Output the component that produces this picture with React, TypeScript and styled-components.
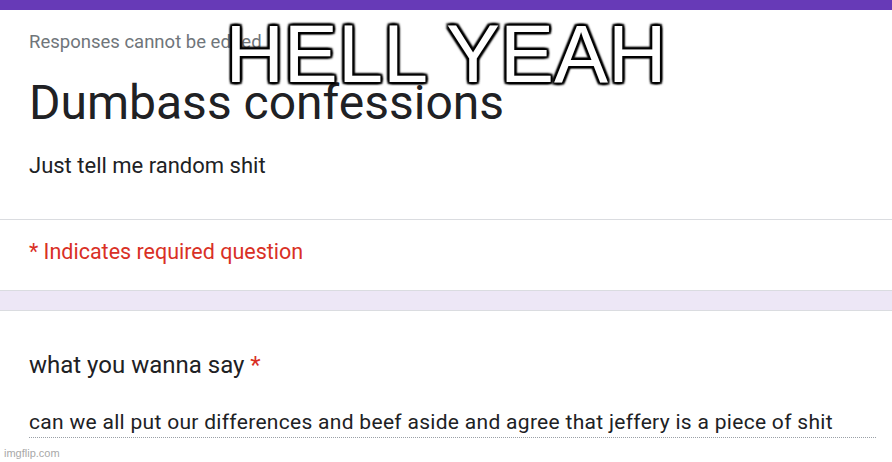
import React from "react";
import styled, { createGlobalStyle } from "styled-components";

const Global = createGlobalStyle`
  html, body { margin: 0; padding: 0; background: #ffffff; }
  body { width: 892px; height: 462px; overflow: hidden; font-family: Roboto, "Noto Sans", Arial, sans-serif; }
`;

const Page = styled.div`
  position: relative;
  width: 892px;
  height: 462px;
  background: #ffffff;
  display: flex;
  flex-direction: column;
`;

const TopBar = styled.div`
  height: 10px;
  background: #673ab7;
  flex-shrink: 0;
`;

const Card = styled.section`
  background: #ffffff;
  border-bottom: 1px solid #dadce0;
  display: flex;
  flex-direction: column;
`;

const Section = styled.div<{ $pt: number; $pb: number }>`
  padding: ${(p) => p.$pt}px 29px ${(p) => p.$pb}px 29px;
  display: flex;
  flex-direction: column;
`;

const Notice = styled.div`
  font-size: 18.5px;
  line-height: 20px;
  color: #70757a;
  white-space: nowrap;
`;

const Title = styled.h1`
  margin: 23px 0 0 0;
  font-size: 48px;
  font-weight: 400;
  line-height: 56px;
  color: #202124;
`;

const Description = styled.div`
  margin-top: 21px;
  font-size: 22px;
  line-height: 28px;
  color: #202124;
`;

const Divider = styled.hr`
  margin: 0;
  border: none;
  border-top: 1px solid #dadce0;
`;

const Required = styled.div`
  font-size: 21.5px;
  line-height: 28px;
  color: #d93025;
`;

const Gap = styled.div`
  height: 19px;
  background: #ede7f6;
  border-bottom: 1px solid #dadce0;
  flex-shrink: 0;
`;

const Question = styled.div`
  font-size: 24px;
  line-height: 30px;
  color: #202124;
`;

const Star = styled.span`
  color: #d93025;
`;

const Answer = styled.div`
  margin-top: 28px;
  margin-right: -13px;
  font-size: 21px;
  line-height: 28px;
  color: #202124;
  letter-spacing: 0.3px;
  white-space: nowrap;
  border-bottom: 1px dotted #9aa0a6;
  padding-bottom: 1px;
`;

const Watermark = styled.div`
  position: absolute;
  left: 4px;
  bottom: 3px;
  font-family: "Liberation Sans", Arial, sans-serif;
  font-size: 11px;
  color: #a8a8a8;
`;

const Meme = styled.div`
  position: absolute;
  left: 0;
  right: 0;
  top: 4px;
  text-align: center;
  font-family: "Liberation Sans", Arial, sans-serif;
  font-size: 81px;
  line-height: 100px;
  color: #ffffff;
  white-space: nowrap;
  text-shadow:
    2px 2px 2px #000, -2px -2px 2px #000, 2px -2px 2px #000, -2px 2px 2px #000,
    0 2px 2px #000, 0 -2px 2px #000, 2px 0 2px #000, -2px 0 2px #000;
`;

export default function App() {
  return (
    <>
      <Global />
      <Page>
        <TopBar />
        <Card>
          <Section $pt={22} $pb={39}>
            <Notice>Responses cannot be edited</Notice>
            <Title>Dumbass confessions</Title>
            <Description>Just tell me random shit</Description>
          </Section>
          <Divider />
          <Section $pt={18} $pb={24}>
            <Required>* Indicates required question</Required>
          </Section>
        </Card>
        <Gap />
        <Section $pt={39} $pb={0}>
          <Question>
            what you wanna say <Star>*</Star>
          </Question>
          <Answer>
            can we all put our differences and beef aside and agree that jeffery is a piece of shit
          </Answer>
        </Section>
        <Watermark>imgflip.com</Watermark>
        <Meme>HELL YEAH</Meme>
      </Page>
    </>
  );
}
